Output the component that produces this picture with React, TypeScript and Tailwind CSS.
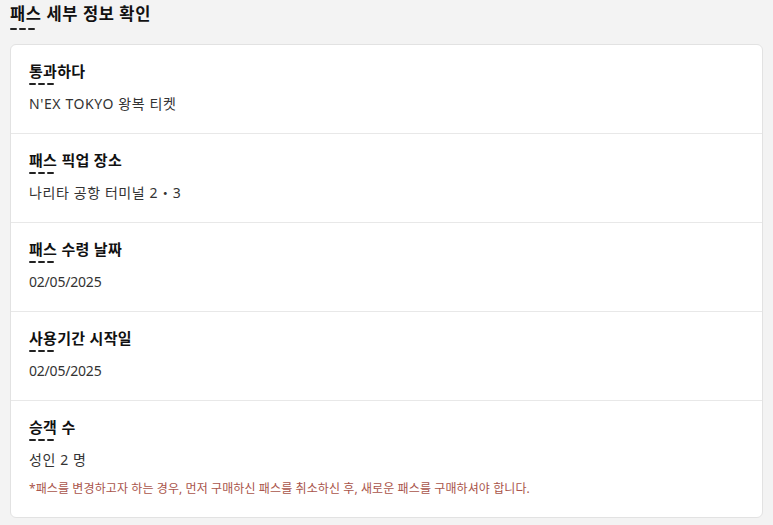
import React from "react";

const ROWS = [
  { title: "통과하다", value: "N'EX TOKYO 왕복 티켓", wide: true },
  { title: "패스 픽업 장소", value: "나리타 공항 터미널 2・3", wide: true },
  { title: "패스 수령 날짜", value: "02/05/2025", wide: false },
  { title: "사용기간 시작일", value: "02/05/2025", wide: false },
  { title: "승객 수", value: "성인 2 명", wide: true },
];

function Dashes() {
  return (
    <div className="flex gap-[2px]">
      <span className="h-[2px] w-[7px] rounded-sm bg-[#222]" />
      <span className="h-[2px] w-[7px] rounded-sm bg-[#222]" />
      <span className="h-[2px] w-[7px] rounded-sm bg-[#222]" />
    </div>
  );
}

export default function App() {
  return (
    <div
      className="min-h-[525px] bg-[#f3f3f3] px-[10px] pt-[2px] pb-2"
      style={{ fontFamily: '"Noto Sans", "Noto Sans CJK KR", sans-serif' }}
    >
      <h2 className="text-[16.5px] font-bold leading-[24px] tracking-[0.6px] text-[#111]">
        패스 세부 정보 확인
      </h2>
      <div className="mt-[2px]">
        <Dashes />
      </div>

      <div className="mt-[14px] rounded-md border border-[#e2e2e2] bg-white">
        {ROWS.map((row, i) => (
          <div
            key={row.title}
            className={`px-[18px] pt-[15px] ${i < ROWS.length - 1 ? "border-b border-[#e8e8e8] pb-[18px]" : "pb-[20px]"}`}
          >
            <p className="text-[15px] font-bold leading-[22px] tracking-[0.3px] text-[#111]">{row.title}</p>
            <div className="mt-[1px]">
              <Dashes />
            </div>
            <p
              className={`mt-[8px] text-[14px] leading-[22px] text-[#333] ${row.wide ? "tracking-[0.6px]" : "tracking-[-0.2px]"}`}
            >
              {row.value}
            </p>
            {i === ROWS.length - 1 && (
              <p className="mt-[10px] text-[12px] leading-[16px] tracking-[0.1px] text-[#a9544a]">
                *패스를 변경하고자 하는 경우, 먼저 구매하신 패스를 취소하신 후, 새로운 패스를 구매하셔야 합니다.
              </p>
            )}
          </div>
        ))}
      </div>
    </div>
  );
}
